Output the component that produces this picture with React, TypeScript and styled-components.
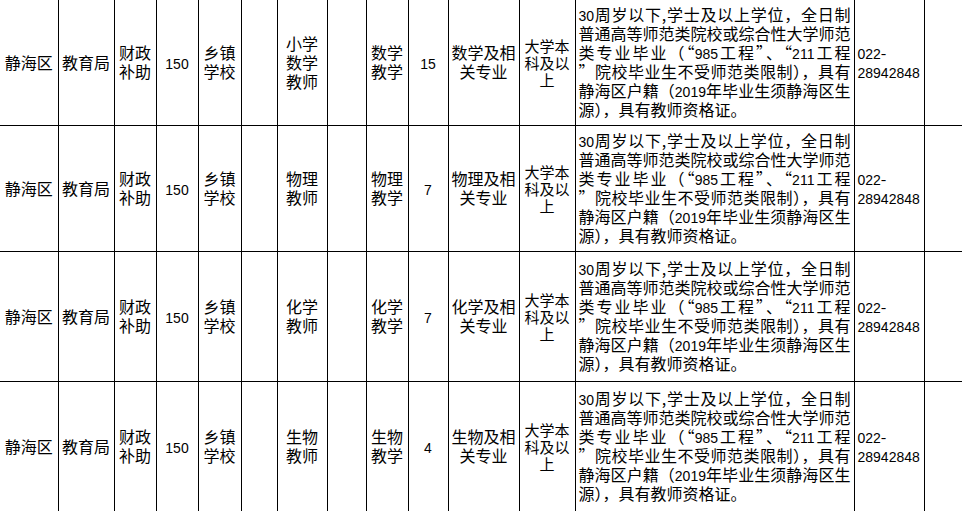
import React from 'react';
import styled, { createGlobalStyle } from 'styled-components';

const GlobalStyle = createGlobalStyle`
  html, body {
    margin: 0;
    padding: 0;
    background: #fff;
    overflow: hidden;
  }
  body {
    font-family: "Noto Sans CJK SC", "Noto Sans", sans-serif;
    color: #000;
  }
`;

const Sheet = styled.table`
  border-collapse: collapse;
  table-layout: fixed;
  width: 1000px;
  font-size: 16px;
  line-height: 19px;
`;

const Row = styled.tr<{ $h: number }>`
  height: ${(p) => p.$h}px;
`;

const Cell = styled.td<{ $left?: boolean; $small?: boolean }>`
  border-right: 1px solid #000;
  border-bottom: 1px solid #000;
  padding: 0 ${(p) => (p.$left ? '3px' : '0')};
  text-align: ${(p) => (p.$left ? 'left' : 'center')};
  vertical-align: middle;
  white-space: nowrap;
  overflow: hidden;
  font-size: ${(p) => (p.$small ? '15px' : '16px')};
  line-height: ${(p) => (p.$small ? '17px' : '19px')};
`;

const Num = styled.span`
  font-family: "Liberation Sans", sans-serif;
  font-size: 14px;
  line-height: 1;
`;

const Line = styled.div<{ $fill: boolean }>`
  text-align: justify;
  text-align-last: ${(p) => (p.$fill ? 'justify' : 'left')};
  white-space: nowrap;
`;

const widths = [58, 56, 42, 42, 43, 36, 50, 39, 42, 40, 71, 56, 279, 70, 78];

const requirement = [
  '30周岁以下,学士及以上学位，全日制',
  '普通高等师范类院校或综合性大学师范',
  '类专业毕业（“985工程”、“211工程',
  '”院校毕业生不受师范类限制），具有',
  '静海区户籍（2019年毕业生须静海区生',
  '源），具有教师资格证。',
];

const rows = [
  { h: 125, post: ['小学', '数学', '教师'], subject: '数学', count: '15', major: '数学及相' },
  { h: 126, post: ['物理', '教师'], subject: '物理', count: '7', major: '物理及相' },
  { h: 130, post: ['化学', '教师'], subject: '化学', count: '7', major: '化学及相' },
  { h: 130, post: ['生物', '教师'], subject: '生物', count: '4', major: '生物及相' },
];

const withDigits = (text: string) =>
  text.split(/(\d+)/).map((part, i) =>
    /^\d+$/.test(part) ? <Num key={i}>{part}</Num> : <React.Fragment key={i}>{part}</React.Fragment>,
  );

const Lines = ({ items }: { items: string[] }) => (
  <>
    {items.map((t, i) => (
      <React.Fragment key={i}>
        {i > 0 && <br />}
        {withDigits(t)}
      </React.Fragment>
    ))}
  </>
);

const App: React.FC = () => (
  <>
    <GlobalStyle />
    <Sheet>
      <colgroup>
        {widths.map((w, i) => (
          <col key={i} style={{ width: w }} />
        ))}
      </colgroup>
      <tbody>
        {rows.map((r) => (
          <Row key={r.subject} $h={r.h}>
            <Cell>静海区</Cell>
            <Cell>教育局</Cell>
            <Cell>
              <Lines items={['财政', '补助']} />
            </Cell>
            <Cell>
              <Lines items={['150']} />
            </Cell>
            <Cell>
              <Lines items={['乡镇', '学校']} />
            </Cell>
            <Cell />
            <Cell>
              <Lines items={r.post} />
            </Cell>
            <Cell />
            <Cell>
              <Lines items={[r.subject, '教学']} />
            </Cell>
            <Cell>
              <Lines items={[r.count]} />
            </Cell>
            <Cell>
              <Lines items={[r.major, '关专业']} />
            </Cell>
            <Cell $small>
              <Lines items={['大学本', '科及以', '上']} />
            </Cell>
            <Cell $left>
              {requirement.map((t, i) => (
                <Line key={i} $fill={i < requirement.length - 1}>
                  {withDigits(t)}
                </Line>
              ))}
            </Cell>
            <Cell $left>
              <Lines items={['022-', '28942848']} />
            </Cell>
            <Cell />
          </Row>
        ))}
      </tbody>
    </Sheet>
  </>
);

export default App;
